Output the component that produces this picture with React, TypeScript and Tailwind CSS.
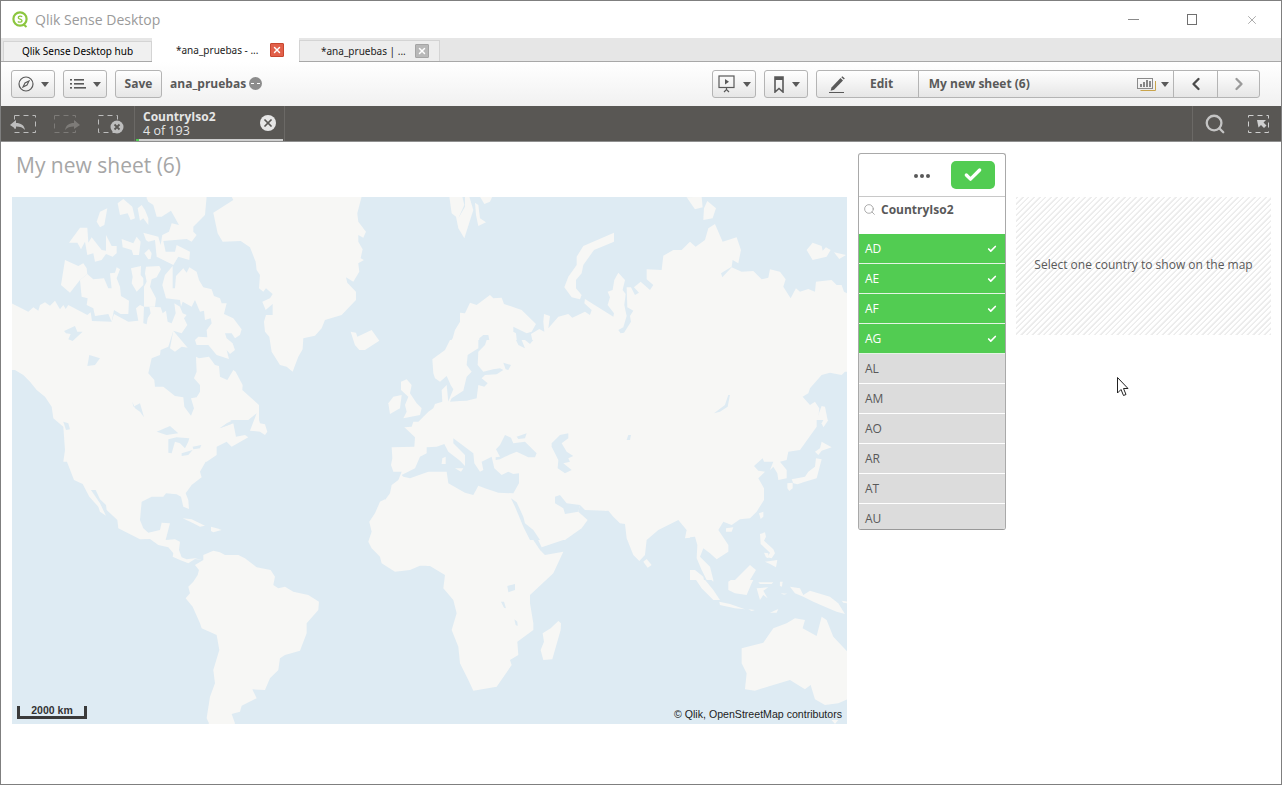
import { Check, ChevronLeft, ChevronRight, Search, X } from "lucide-react";

type Region = { tx: number; ty: number; land: string[]; water: string[]; isles: string[] };

// map outlines are traced per quadrant, coords are 3x page pixels
const regions: Region[] = [
  {
    tx: 0,
    ty: 190,
    land: [
      "0,322 35,340 85,365 100,352 115,362 120,345 135,337 150,347 165,332 180,358 190,345 197,357 205,345 262,375 272,367 276,393 335,395 342,372 385,395 415,392 408,355 420,345 432,350 430,400 440,403 443,385 452,370 448,350 482,352 488,370 498,362 503,395 515,400 527,370 523,340 540,350 548,370 560,375 552,385 562,405 545,430 520,422 505,470 482,480 480,495 455,505 445,550 463,570 465,590 490,590 525,618 550,622 553,650 573,677 582,655 573,625 590,622 600,605 600,585 582,565 590,545 588,500 597,505 627,500 645,525 657,528 660,560 682,570 700,540 707,545 728,585 727,600 777,645 777,690 780,700 795,703 802,725 795,735 780,725 750,722 770,670 745,690 715,690 700,690 680,700 660,715 700,700 708,740 735,735 745,742 695,770 680,755 650,770 650,795 620,815 190,815 195,780 190,710 160,685 155,650 135,620 110,600 90,575 70,555 45,540 30,540 0,530",
      "1290,665 1270,680 1265,695 1240,710 1212,712 1245,740 1240,770 1180,775 1172,790 1180,815 1250,815 1270,790 1278,775 1300,770",
    ],
    water: [
      "192,423 225,408 232,425 248,425 218,453 205,448 212,432 198,430",
      "268,495 300,505 285,525 262,528",
      "397,635 400,650 420,640 432,682 420,665 405,655",
      "470,725 510,708 535,730 500,735",
      "505,748 530,742 568,745 565,755 555,775 540,760 525,755 515,790 505,788",
      "545,790 578,780 565,795 545,798",
      "578,770 604,765 600,775 580,778",
      "117,633 130,640 135,660 122,658",
      "190,695 205,700 210,718 198,720",
      "658,715 680,702 705,700 690,690 715,692 725,705 700,700",
    ],
    isles: [
      "195,210 235,228 250,220 260,235 262,252 240,270 210,308 183,285",
      "240,270 262,252 280,268 312,265 325,295 335,295 330,250 345,248 350,232 360,238 350,265 360,290 363,318 387,332 385,372 362,372 342,360 335,395 325,372 285,378 280,355 260,345 263,325 245,320",
      "207,158 240,113 262,113 265,158 275,142 305,180 318,182 318,135 335,168 350,168 350,190 338,200 318,192 305,210 285,215 280,190 262,195 255,155 243,178 232,158",
      "290,95 300,65 322,55 313,105 300,112",
      "353,40 370,27 397,50 405,85 392,90 383,70 360,75",
      "413,55 425,45 435,60 445,85 445,105 430,85 420,92",
      "440,25 445,35 460,45 470,80 485,80 513,62 537,105 515,100 507,125 487,135 482,165 475,140 430,128 438,150 445,155 465,150 470,200 520,225 535,200 568,210 570,185 530,165 525,185 497,185 490,153 560,147 575,155 590,135 580,125 580,110 615,75 620,20 440,20",
      "365,147 400,160 410,140 422,155 417,195 400,195 395,180 368,172",
      "433,190 447,177 455,190 452,207 445,208",
      "393,235 423,228 422,255 430,265 430,285 410,305 395,280 398,260",
      "438,230 478,228 483,238 470,262 455,268 450,290 468,325 465,350 432,350 432,290 440,275 435,250",
      "518,228 518,295 525,295 528,258 550,235 560,248 568,232 590,245 597,270 610,292 635,298 642,318 660,325 665,340 680,340 672,372 700,385 725,418 720,435 705,445 695,430 675,430 680,445 698,460 705,480 690,492 680,480 687,507 650,495 625,465 590,465 585,450 595,440 622,442 620,420 635,400 632,385 615,390 612,362 600,365 585,330 575,350 548,335 543,350 540,330 498,325 487,285 495,255",
      "520,422 535,440 563,473 545,470 525,485 510,475",
      "640,68 700,30 695,20 1085,20 1072,70 1075,95 1098,125 1090,143 1075,135 1075,155 1088,178 1082,205 1092,210 1075,220 1078,245 1060,275 1038,262 1042,278 1068,305 1068,330 1025,375 975,390 965,415 945,437 910,445 908,478 895,500 878,545 860,530 840,525 815,485 808,440 795,425 792,395 798,375 818,375 818,342 797,360 787,335 810,325 818,312 798,295 790,305 777,295 780,255 770,240 767,215 750,172 722,153 668,155 653,130",
      "1052,425 1068,428 1072,440 1115,420 1138,452 1095,480 1078,480 1065,465",
    ],
  },
  {
    tx: 430,
    ty: 190,
    land: [
      "5,510 45,480 68,445 75,420 90,395 90,368 105,370 120,338 140,345 180,315 190,325 215,323 222,342 275,360 318,402 305,425 290,430 250,410 250,425 258,430 262,465 285,475 300,460 308,455 303,432 328,417 343,425 340,395 342,372 360,378 355,415 385,380 415,372 427,383 465,365 480,375 485,360 463,340 465,327 550,380 552,370 533,345 540,322 533,305 548,300 553,270 565,248 585,270 578,300 587,312 583,345 590,378 580,412 565,420 572,430 582,428 603,395 600,378 610,362 592,352 590,292 603,292 615,315 627,308 612,292 632,275 660,300 670,285 650,268 650,238 695,240 700,197 730,180 755,180 780,155 797,170 825,150 835,115 855,102 878,155 920,142 933,180 925,220 908,210 905,230 873,250 877,262 905,232 935,245 970,243 995,268 1015,263 1020,238 1050,245 1067,268 1060,290 1082,325 1098,295 1110,305 1135,297 1155,305 1158,275 1205,270 1220,285 1235,285 1242,305 1260,315 1260,545 1245,545 1235,555 1200,548 1175,555 1140,595 1135,610 1118,620 1140,645 1155,635 1168,655 1162,710 1110,775 1075,790 1065,815 -10,815 -10,660 15,645 40,635 35,605 48,585 52,600 60,625 68,590 60,562 50,558 30,575 12,565",
    ],
    water: [
      "148,445 160,435 175,435 178,450 150,480 145,510 148,530 165,545 210,535 218,542 200,555 165,565 175,582 160,590 145,590 140,620 130,632 90,640 65,630 62,625 100,600 110,565 125,545 112,520 118,490 145,470",
      "218,515 243,525 238,540 228,540",
      "852,670 885,645 895,615 900,615 893,650 870,665",
      "595,735 603,735 600,750 590,750",
    ],
    isles: [
      "58,20 97,20 103,45 85,85 105,50 105,20 118,20 130,60 103,145 85,115 78,80 65,70",
      "135,38 145,45 150,85 168,97 145,108 138,75",
      "150,20 187,20 180,35 163,42",
      "552,128 552,155 492,180 460,225 455,250 438,270 438,295 455,315 450,328 425,322 403,292 415,260 440,225 440,200 460,168",
      "770,22 815,20 818,52 795,58",
      "832,33 858,55 848,85 820,90 822,55",
      "1130,180 1148,158 1175,168 1178,182 1188,172 1202,180 1190,200 1148,210",
      "1212,187 1248,195 1228,207",
      "1175,648 1185,650 1195,700 1175,712 1165,705 1163,680",
    ],
  },
  {
    tx: 0,
    ty: 460,
    land: [
      "195,-10 222,60 248,72 268,110 295,140 300,155 318,167 300,130 273,90 287,90 300,118 318,135 320,150 352,180 355,205 420,238 450,237 475,255 505,262 520,280 518,290 540,300 565,310 585,297 605,300 585,295 560,298 545,292 537,270 540,245 525,238 497,240 510,190 485,188 480,210 445,218 430,205 420,180 425,125 455,110 490,110 498,100 530,103 543,110 550,140 567,147 565,120 557,100 575,75 605,52 600,35 620,0 620,-10",
      "640,272 610,285 610,300 585,315 597,330 593,345 580,365 565,380 570,400 557,415 578,440 600,490 605,505 650,525 658,570 640,630 645,670 630,710 620,775 627,790 620,800 700,800 705,790 695,762 720,755 725,737 770,715 757,688 795,690 810,655 835,630 840,595 855,585 900,572 920,520 920,490 955,450 957,425 925,405 880,395 855,380 835,385 820,375 825,350 812,330 770,322 735,295 715,285 675,285 660,277",
      "1300,36 1240,50 1215,55 1205,50 1175,80 1170,110 1140,125 1125,160 1108,185 1115,215 1105,245 1115,265 1140,290 1145,310 1185,335 1230,330 1260,317 1300,317",
      "1172,-10 1180,32 1200,35 1255,-10",
    ],
    water: [],
    isles: [
      "548,175 575,178 615,197 600,200 580,190",
      "633,200 650,205 665,210 640,217 633,213",
    ],
  },
  {
    tx: 430,
    ty: 460,
    land: [
      "-10,318 0,318 45,345 40,385 70,420 80,460 65,510 85,560 90,610 115,660 130,692 200,680 245,615 240,600 265,585 262,545 310,510 310,490 300,430 300,405 370,340 400,275 345,285 330,270 300,225 280,165 245,115 250,98 205,97 165,80 130,103 95,85 55,70 50,35 -10,33",
      "248,100 270,145 285,175 310,210 335,262 400,240 435,225 475,180 445,135 435,155 405,160 375,110 395,105 400,125 440,135 445,130 465,155 535,152 550,170 570,190 585,192 590,235 610,285 628,303 645,285 650,240 685,210 745,180 770,210 765,235 798,232 805,290 830,345 850,365 850,340 820,300 820,265 850,275 865,295 895,265 895,240 870,205 880,190 905,190 935,178 970,170 1000,120 1005,95 985,55 1005,35 985,30 970,10 990,-10 110,-10 110,40",
    ],
    water: [
      "-10,-10 75,-10 105,30 115,15 105,-10 140,-10 145,25 170,-10 190,20 215,42 265,40 265,70 250,97 205,97 165,80 130,103 95,85 55,70 50,35 -10,33",
    ],
    isles: [
      "895,365 965,318 978,345 965,370 950,405 915,400 895,390",
      "980,385 1015,382 1000,392 1013,415 1000,405 990,420",
      "780,333 805,335 850,390 870,420 850,420 815,385",
      "868,425 900,432 945,448 915,445 870,435",
      "955,448 975,450 965,453",
      "1020,458 1045,447 1040,458",
      "1080,380 1110,385 1120,405 1140,392 1200,410 1225,430 1245,462 1220,455 1195,445 1150,425 1120,410 1095,400",
      "1050,365 1058,365 1056,380 1050,378",
      "985,367 1030,367 1025,372 990,372",
      "1052,400 1072,401 1062,404",
      "1235,422 1252,425 1252,430 1240,428",
      "650,297 665,315 653,323 640,305",
      "385,483 393,490 392,510 367,598 340,600 332,570 342,545 338,520 362,505",
      "935,565 1000,548 1030,505 1070,490 1095,475 1125,480 1118,505 1160,528 1175,470 1190,480 1210,530 1252,575 1260,715 1225,730 1185,735 1155,718 1142,675 1125,688 1080,660 1020,678 975,692 945,688 950,640 935,610",
      "1205,780 1225,780 1215,792",
    ],
  },
];

// closer tracings painted over the quadrants: Europe and East Asia
const insets: Region[] = [
  {
    tx: 385,
    ty: 340,
    land: ["0,0 660,0 660,600 0,600"],
    water: [
      "0,0 195,0 180,30 142,58 145,100 150,115 165,125 185,108 197,135 205,148 195,172 190,185 185,135 170,150 172,185 150,192 145,205 130,215 115,230 100,245 85,245 80,260 58,262 90,292 88,320 20,322 22,355 18,375 25,395 50,395 40,420 20,435 15,460 0,480",
      "280,0 305,0 300,15 280,35 278,75 295,95 325,88 345,85 355,90 335,103 300,105 290,115 308,130 298,140 280,135 275,175 245,182 225,183 195,185 200,175 235,152 245,110 260,95 245,75 248,45 280,25",
      "355,68 378,75 370,90 362,88",
      "393,0 410,0 420,25 400,15",
      "420,0 445,0 435,12",
      "50,405 90,385 105,350 125,340 125,322 155,320 178,312 190,335 225,362 240,378 235,385 210,385 228,395 240,378 240,345 205,310 205,295 225,310 265,340 268,370 285,395 295,390 290,365 320,350 328,385 350,405 370,395 385,402 402,400 402,430 385,460 340,458 300,445 280,437 265,465 240,458 190,430 185,395 130,395 75,415 55,410",
      "332,352 345,350 333,328 345,315 360,285 378,293 385,310 420,305 455,340 450,352 430,352 395,335 360,350 345,358 332,360",
      "395,290 425,280 420,295 400,297",
      "500,310 525,285 550,280 550,295 530,310 545,335 565,348 550,355 555,365 535,370 560,390 540,400 518,385 520,360 500,320",
      "378,475 395,487 415,530 420,550 445,570 465,600 435,600 415,560 390,500",
      "510,470 525,465 545,490 585,495 580,515 540,522 535,505 510,490",
      "585,495 600,510 660,512 660,600 540,600 590,565 608,540 580,515",
    ],
    isles: [
      "172,355 182,350 182,372 170,372",
      "48,125 65,118 80,135 75,160 95,190 110,205 105,225 55,235 65,215 60,195 70,170 48,150",
      "25,170 50,165 45,205 15,222 10,190",
    ],
  },
  {
    tx: 690,
    ty: 420,
    land: ["0,0 471,0 471,480 0,480"],
    water: [
      "380,0 471,0 471,480 70,480 60,440 30,410 40,385 60,400 80,418 115,395 115,375 85,330 100,305 125,315 150,298 180,295 200,275 222,240 222,205 205,175 225,155 205,152 192,138 218,115 222,125 250,125 240,150 250,140 262,160 265,180 290,175 290,150 270,125 290,120 295,95 330,90 380,20",
      "50,480 35,450 20,415 22,375 15,350 0,352 0,480",
    ],
    isles: [
      "395,65 425,82 395,92 385,105 375,95 390,85",
      "378,115 395,118 388,145 380,175 345,185 322,193 310,190 305,178 345,170 355,155 375,140",
      "292,190 308,188 308,205 298,213 292,205",
      "395,10 400,0 415,0 405,15 400,22",
      "207,280 220,275 220,290 212,297",
      "108,325 130,322 125,335 108,335",
      "210,342 225,337 228,350 222,362 250,388 255,400 245,415 232,412 240,398 212,372",
      "222,398 235,400 235,415 228,412",
      "225,425 262,420 258,442 240,432",
      "135,480 180,435 198,450 180,480",
      "0,450 15,450 40,470 42,480 0,480",
    ],
  },
];

const lakes = [
  "232,378 255,372 255,390 235,397",
  "213,425 222,425 228,445 222,443",
  "253,478 262,485 263,498 257,495",
];

const Caret = () => (
  <span className="h-0 w-0 border-x-[4px] border-t-[5px] border-x-transparent border-t-[#595959]" />
);

const ToolButton = ({ children, className }: { children: React.ReactNode; className: string }) => (
  <button className={`flex h-[28px] items-center justify-center gap-[7px] rounded-[3px] border border-[#b4b4b4] bg-gradient-to-b from-white to-[#e6e6e6] ${className}`}>
    {children}
  </button>
);

const Shapes = ({ r, list, fill }: { r: Region; list: string[]; fill: string }) => (
  <g transform={`translate(${r.tx} ${r.ty}) scale(0.3333)`} fill={fill}>
    {list.map((p, j) => (
      <polygon key={j} points={p} />
    ))}
  </g>
);

const LAND = "#f7f7f5";
const SEA = "#deebf3";

const WorldMap = () => (
  <svg viewBox="12 197 835 527" className="block h-[527px] w-[835px] bg-[#deebf3]">
    {regions.map((r, i) => (
      <Shapes key={`l${i}`} r={r} list={r.land} fill={LAND} />
    ))}
    {regions.map((r, i) => (
      <Shapes key={`w${i}`} r={r} list={r.water} fill={SEA} />
    ))}
    {regions.map((r, i) => (
      <Shapes key={`i${i}`} r={r} list={r.isles} fill={LAND} />
    ))}
    <Shapes r={regions[3]} list={lakes} fill={SEA} />
    {insets.map((r, i) => (
      <g key={`x${i}`}>
        <Shapes r={r} list={r.land} fill={LAND} />
        <Shapes r={r} list={r.water} fill={SEA} />
        <Shapes r={r} list={r.isles} fill={LAND} />
      </g>
    ))}
  </svg>
);

const selected = ["AD", "AE", "AF", "AG"];
const others = ["AL", "AM", "AO", "AR", "AT", "AU"];

export default function App() {
  return (
    <div className="relative h-[785px] w-[1282px] overflow-hidden bg-white font-['Open_Sans',sans-serif]">
      <div className="flex h-[785px] flex-col border border-[#7f7f7f]">
        {/* title bar */}
        <div className="flex h-[37px] shrink-0 items-center justify-between pl-[11px] pr-[22px]">
          <div className="flex items-center gap-[7px]">
            <svg width="16" height="17" viewBox="0 0 16 17" fill="none">
              <circle cx="8" cy="8" r="6.6" stroke="#8cc63f" strokeWidth="2.2" />
              <path d="M11 13l3.5 3" stroke="#8cc63f" strokeWidth="2" />
              <path d="M10.2 5.8C9 4.8 6 5 6.3 6.9c.3 1.700 3.700 1 3.700 2.900 0 1.700-3 1.700-4.200.6" stroke="#8cc63f" strokeWidth="1.3" />
            </svg>
            <span className="text-[14px] text-[#9a9a9a]">Qlik Sense Desktop</span>
          </div>
          <div className="flex items-center gap-[48px] text-[#707070]">
            <span className="h-px w-[11px] bg-[#8a8a8a]" />
            <span className="h-[11px] w-[10px] border border-[#707070]" />
            <X size={14} strokeWidth={1} />
          </div>
        </div>

        {/* tabs */}
        <div className="flex h-[24px] shrink-0 items-end border-b border-[#a8a8a8] bg-[#e6e6e6] pl-[2px] font-['Noto_Sans',sans-serif] text-[10px] text-[#222]">
          <div className="flex h-[20px] w-[149px] items-center justify-center border border-b-0 border-[#d4d4d4] bg-[#f0f0f0] text-black">
            Qlik Sense Desktop hub
          </div>
          <div className="relative -mb-px flex h-[24px] w-[147px] items-center bg-white pl-[24px]">
            *ana_pruebas - ...
            <span className="absolute left-[118px] top-[5px] flex h-[14px] w-[14px] items-center justify-center rounded-[1px] border border-[#c8472f] bg-[#e2604a]">
              <X size={10} strokeWidth={3.5} className="text-white" />
            </span>
          </div>
          <div className="relative flex h-[21px] w-[141px] items-center border border-b-0 border-[#d4d4d4] bg-[#ededed] pl-[21px]">
            *ana_pruebas | ...
            <span className="absolute left-[115px] top-[3px] flex h-[14px] w-[14px] items-center justify-center rounded-[1px] border border-[#a5a5a5] bg-[#b8b8b8]">
              <X size={10} strokeWidth={3.5} className="text-white" />
            </span>
          </div>
        </div>

        {/* toolbar */}
        <div className="flex h-[44px] shrink-0 items-center justify-between bg-gradient-to-b from-white to-[#f1f1f1] pl-[10px] pr-[21px]">
          <div className="flex items-center gap-[8px]">
            <ToolButton className="w-[44px]">
              <svg width="16" height="16" viewBox="0 0 16 16" fill="none">
                <circle cx="8" cy="8" r="7" stroke="#595959" strokeWidth="1.2" />
                <path d="M11 5L9 9 5 11l2-4z" stroke="#595959" strokeWidth="1.1" />
              </svg>
              <Caret />
            </ToolButton>
            <ToolButton className="w-[44px]">
              <svg width="16" height="12" viewBox="0 0 16 12" fill="#595959">
                <rect x="0" y="1" width="2" height="1.6" />
                <rect x="4" y="1" width="10" height="1.6" />
                <rect x="0" y="5" width="2" height="1.6" />
                <rect x="4" y="5" width="10" height="1.6" />
                <rect x="0" y="9" width="2" height="1.6" />
                <rect x="4" y="9" width="12" height="1.6" />
              </svg>
              <Caret />
            </ToolButton>
            <ToolButton className="w-[47px] text-[12px] font-bold text-[#595959]">Save</ToolButton>
            <span className="text-[12px] font-bold text-[#595959]">ana_pruebas</span>
            <span className="-ml-[5px] -mt-[2px] flex h-[13px] w-[13px] items-center justify-center rounded-full bg-[#8c8c8c]">
              <span className="h-px w-[9px] border-t border-dashed border-white" />
            </span>
          </div>
          <div className="flex items-center gap-[8px]">
            <ToolButton className="w-[44px]">
              <svg width="18" height="18" viewBox="0 0 18 18" fill="none">
                <rect x="1" y="1" width="15" height="11.5" stroke="#595959" strokeWidth="1.2" />
                <path d="M7 4l4 2.7L7 9.4z" fill="#595959" />
                <path d="M8.5 13v2M6 17l2.5-2.5L11 17" stroke="#595959" strokeWidth="1.2" />
              </svg>
              <Caret />
            </ToolButton>
            <ToolButton className="w-[44px]">
              <svg width="12" height="17" viewBox="0 0 12 17" fill="none">
                <path d="M2 1h8v15l-4-3.500L2 16z" stroke="#595959" strokeWidth="1.6" />
                <rect x="2" y="1" width="8" height="3" fill="#595959" />
              </svg>
              <Caret />
            </ToolButton>
            <div className="flex h-[28px] w-[444px] rounded-[3px] border border-[#b4b4b4] bg-gradient-to-b from-white to-[#e6e6e6] text-[12px] font-bold text-[#595959]">
              <div className="flex w-[102px] items-center border-r border-[#b4b4b4] pl-[11px]">
                <svg width="18" height="18" viewBox="0 0 18 18" fill="#595959">
                  <path d="M3.5 12.5L12.5 3l2.5 2.4L6 14.800l-3.400 1z" />
                  <path d="M13.3 2.200l1-1 2.500 2.400-1 1z" />
                  <rect x="1" y="17" width="15" height="1" />
                </svg>
                <span className="ml-[24px]">Edit</span>
              </div>
              <div className="flex w-[256px] items-center justify-between border-r border-[#b4b4b4] pl-[10px] pr-[4px]">
                <span>My new sheet (6)</span>
                <span className="flex items-center gap-[5px]">
                  <svg width="19" height="16" viewBox="0 0 19 16" fill="none">
                    <rect x="0.5" y="2.5" width="15" height="10" stroke="#8a8a8a" />
                    <path d="M3.500 14.500h15V5" stroke="#c9a44c" />
                    <path d="M4 11V8M7 11V6M10 11V4M13 11V5" stroke="#595959" strokeWidth="1.4" />
                  </svg>
                  <Caret />
                </span>
              </div>
              <div className="flex w-[44px] items-center justify-center border-r border-[#b4b4b4]">
                <ChevronLeft size={20} strokeWidth={2.8} className="text-[#4a4a4a]" />
              </div>
              <div className="flex w-[41px] items-center justify-center">
                <ChevronRight size={20} strokeWidth={2.8} className="text-[#9a9a9a]" />
              </div>
            </div>
          </div>
        </div>

        {/* selections bar */}
        <div className="flex h-[36px] shrink-0 justify-between border-b border-[#8f8f8f] bg-[#595754]">
          <div className="flex">
            <div className="flex w-[133px] items-center gap-[18px] pl-[9px]">
              <svg width="26" height="20" viewBox="0 0 26 20" fill="none">
                <rect x="4.5" y="1.5" width="21" height="17" stroke="#bdbdbd" strokeDasharray="5 4" />
                <path d="M0 11l6-5v3c5 0 8 2 9 7-2-2.500-5-3.500-9-3.500V15z" fill="#bdbdbd" />
              </svg>
              <svg width="26" height="20" viewBox="0 0 26 20" fill="none">
                <rect x="0.500" y="1.500" width="21" height="17" stroke="#7d7b78" strokeDasharray="5 4" />
                <path d="M26 11l-6-5v3c-5 0-8 2-9 7 2-2.500 5-3.500 9-3.500V15z" fill="#7d7b78" />
              </svg>
              <svg width="26" height="20" viewBox="0 0 26 20" fill="none">
                <rect x="0.500" y="1.500" width="19" height="17" stroke="#bdbdbd" strokeDasharray="5 4" />
                <circle cx="19" cy="13" r="6.500" fill="#bdbdbd" />
                <path d="M16.500 10.500l5 5m0-5l-5 5" stroke="#595754" strokeWidth="1.800" />
              </svg>
            </div>
            <div className="relative flex w-[151px] flex-col border-x border-[#6b6966] pl-[8px] pt-[4px] text-[12px] leading-[14px] text-[#e6e6e6]">
              <span className="font-bold">CountryIso2</span>
              <span className="text-[12.5px]">4 of 193</span>
              <span className="absolute right-[8px] top-[9px] flex h-[16px] w-[16px] items-center justify-center rounded-full bg-[#e6e6e6]">
                <X size={12} strokeWidth={3.5} className="text-[#595754]" />
              </span>
              <span className="absolute bottom-0 left-[1px] right-[1px] h-[2px] bg-[#cfcfcf]" />
              <span className="absolute bottom-0 left-[1px] h-[2px] w-[3px] bg-[#52cc52]" />
            </div>
          </div>
          <div className="flex w-[89px] items-center gap-[22px] border-l border-[#6b6966] pl-[11px]">
            <Search size={22} strokeWidth={2.5} className="text-[#c4c4c4]" />
            <svg width="22" height="20" viewBox="0 0 22 20" fill="none">
              <rect x="0.500" y="1.500" width="20" height="17" stroke="#d0d0d0" strokeDasharray="5 4" />
              <path d="M9 6h9l-2.500 2.500 3 3-2.500 2.500-3-3L10.500 13.500z" fill="#d0d0d0" />
            </svg>
          </div>
        </div>

        {/* sheet */}
        <div className="flex flex-1 pl-[11px]">
          <div className="w-[835px] shrink-0">
            <h1 className="flex h-[55px] items-center pb-[8px] pl-[4px] text-[21px] font-normal text-[#a6a6a6]">My new sheet (6)</h1>
            <div className="relative h-[527px] w-[835px]">
              <WorldMap />
              <div className="absolute bottom-[5px] left-[5px] flex h-[13px] w-[70px] items-end justify-center border-x-[3px] border-b-[3px] border-[#3a3a3a] font-['Liberation_Sans',sans-serif] text-[10.5px] leading-[12px] font-semibold text-[#333]">
                <span>2000 km</span>
              </div>
              <span className="absolute bottom-[1px] right-[5px] font-['Liberation_Sans',sans-serif] text-[10.6px] text-[#222]">
                © Qlik, OpenStreetMap contributors
              </span>
            </div>
          </div>

          <div className="ml-[11px] mt-[11px] h-[377px] w-[148px] shrink-0 overflow-hidden rounded-[3px] border border-[#a9a9a9] border-b-[#999]">
            <div className="flex h-[43px] items-center justify-end gap-[21px] border-b border-[#c8c8c8] pr-[10px]">
              <div className="mt-[2px] flex gap-[2px]">
                <span className="h-[4px] w-[4px] rounded-full bg-[#595959]" />
                <span className="h-[4px] w-[4px] rounded-full bg-[#595959]" />
                <span className="h-[4px] w-[4px] rounded-full bg-[#595959]" />
              </div>
              <div className="flex h-[28px] w-[44px] items-center justify-center rounded-[5px] bg-[#52cc52]">
                <Check size={20} strokeWidth={4} className="text-white" />
              </div>
            </div>
            <div className="flex h-[37px] items-start gap-[5px] pl-[4px] pt-[4px] text-[12px] font-bold text-[#595959]">
              <Search size={13} strokeWidth={1.5} className="mt-[2px] text-[#9a9a9a]" />
              CountryIso2
            </div>
            {selected.map((code) => (
              <div key={code} className="flex h-[30px] items-center justify-between border-b border-[#e4f5e4] bg-[#52cc52] pl-[6px] pr-[8px] text-[12px] text-white last:border-b-0">
                {code}
                <Check size={10} strokeWidth={4} />
              </div>
            ))}
            {others.map((code) => (
              <div key={code} className="flex h-[30px] items-center border-b border-white bg-[#dcdcdc] pl-[6px] text-[12px] text-[#595959]">
                {code}
              </div>
            ))}
          </div>

          <div className="ml-[10px] mt-[55px] flex h-[138px] w-[255px] shrink-0 items-center justify-center bg-[repeating-linear-gradient(-45deg,#ececec,#ececec_1px,#ffffff_2px,#ffffff_4px)] pb-[2px] text-[12px] text-[#595959]">
            Select one country to show on the map
          </div>
        </div>
      </div>

      {/* mouse pointer */}
      <svg width="14" height="21" viewBox="0 0 14 21" className="absolute left-[1117px] top-[377px]">
        <path d="M.5.500V16l3.500-3.500 2.500 6 2.500-1-2.500-6H11z" fill="white" stroke="#222" strokeWidth="1" />
      </svg>
    </div>
  );
}
